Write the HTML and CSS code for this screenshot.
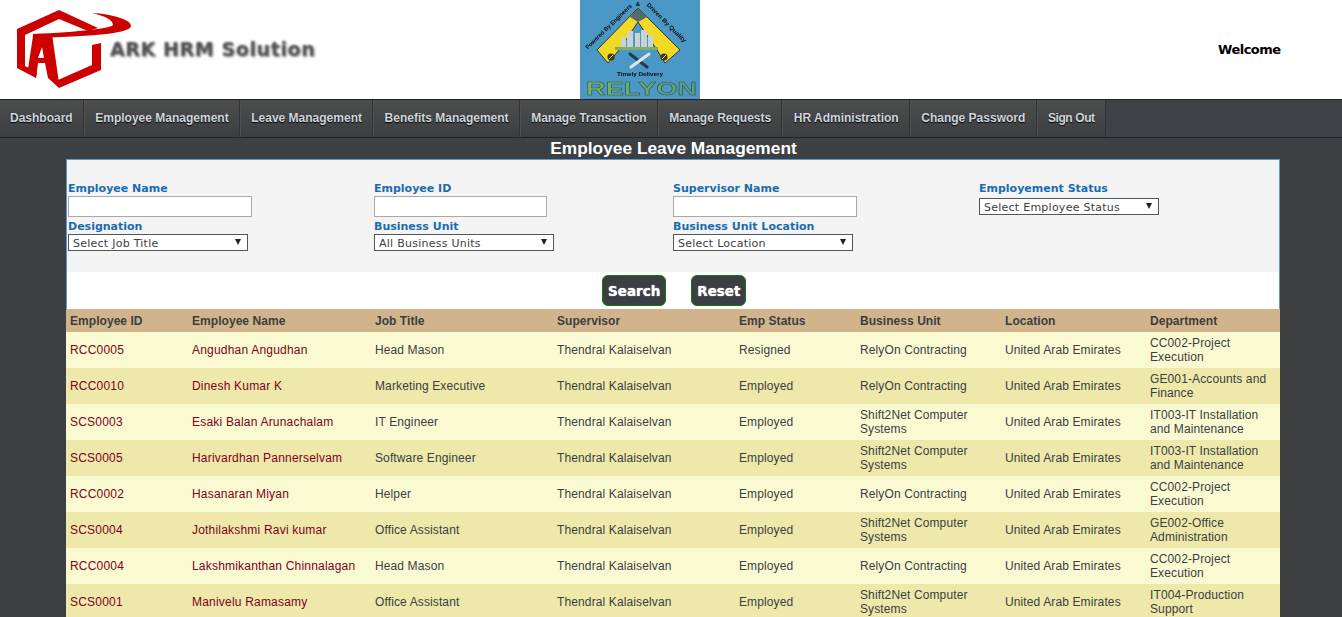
FILE: index.html
```html
<!DOCTYPE html>
<html lang="en">
<head>
<meta charset="utf-8">
<title>Employee Leave Management</title>
<link rel="stylesheet" href="styles.css">
</head>
<body>
<header class="top">
  <div class="brand">
    <svg class="brand-mark" width="135" height="90" viewBox="0 0 135 90">
      <g class="soft">
      <path class="red" d="M59 10 L17 29 L17 68 L36 78 L37 72 L25 66 L25 35 L59 19 L88 31 L98 28 Z"/>
      <path class="red" fill-rule="evenodd" d="M33 36 L52 34 L59 83 L48 78 L45 63 L38 63 L36 78 L28 69 Z M42 47 L38 58 L44 58 Z"/>
      <path class="red" d="M48 78 L59 88 L101 70 L101 43 L92 45 L92 65 L58 80 Z"/>
      <path class="red" d="M92 13 C112 14 132 20 131 26 C130 33 100 36 33 38 L33 34 C80 32 112 28 113 25 C113 20 105 16 92 13 Z"/>
      </g>
    </svg>
    <span class="brand-name">ARK HRM Solution</span>
  </div>
  <svg class="partner" width="120" height="99" viewBox="0 0 120 99">
    <defs>
      <linearGradient id="word" x1="0" y1="0" x2="1" y2="0">
        <stop offset="0" stop-color="#79b85f"/>
        <stop offset="1" stop-color="#4f9f86"/>
      </linearGradient>
    </defs>
    <rect width="120" height="99" fill="#4b97c6"/>
    <g class="soft">
    <path d="M17 50 L58 8 L100 50 L85 63 L77 50 L58 22 L39 50 L28 63 Z" fill="#f2d923" stroke="#2c3436" stroke-width="1"/>
    <path d="M58 8 L50 17 L58 22 L67 17 Z" fill="#59686b"/>
    <circle cx="31" cy="57" r="3.6" fill="#3a3a2a"/>
    <circle cx="84" cy="57" r="3.6" fill="#3a3a2a"/>
    <path d="M29 59 L33 55 M82 59 L86 55" stroke="#f2d923" stroke-width="1"/>
    <g fill="#c9d3d4">
      <rect x="41" y="37" width="5" height="10"/>
      <rect x="47" y="31" width="6" height="16"/>
      <rect x="55" y="33" width="5" height="14"/>
      <rect x="61" y="30" width="6" height="17"/>
      <rect x="68" y="35" width="5" height="12"/>
    </g>
    <rect x="35" y="47" width="43" height="3" fill="#7fae6a"/>
    <g stroke-linecap="round" fill="none">
      <path d="M50 54 L67 67" stroke="#1f3c52" stroke-width="3"/>
      <path d="M69 54 L51 67" stroke="#dfe6ea" stroke-width="3"/>
    </g>
    <text class="partner-small" x="60" y="76" text-anchor="middle" textLength="46" lengthAdjust="spacingAndGlyphs">Timely Delivery</text>
    <text class="partner-small" x="30" y="28" transform="rotate(-44 30 28)" text-anchor="middle" textLength="62" lengthAdjust="spacingAndGlyphs">Powered By Engineers</text>
    <text class="partner-small" x="58" y="6" text-anchor="middle">&amp;</text>
    <text class="partner-small" x="85" y="24" transform="rotate(45 85 24)" text-anchor="middle" textLength="53" lengthAdjust="spacingAndGlyphs">Driven By Quality</text>
    <text class="partner-word" x="6" y="95" textLength="111" lengthAdjust="spacingAndGlyphs" fill="url(#word)">RELYON</text>
    </g>
  </svg>
  <strong class="welcome">Welcome</strong>
</header>

<nav class="nav">
  <a class="nav-item" href="#">Dashboard</a>
  <a class="nav-item" href="#">Employee Management</a>
  <a class="nav-item" href="#">Leave Management</a>
  <a class="nav-item" href="#">Benefits Management</a>
  <a class="nav-item" href="#">Manage Transaction</a>
  <a class="nav-item" href="#">Manage Requests</a>
  <a class="nav-item" href="#">HR Administration</a>
  <a class="nav-item" href="#">Change Password</a>
  <a class="nav-item" href="#">Sign Out</a>
</nav>

<h1 class="title">Employee Leave Management</h1>

<main class="panel">
  <form class="filters">
    <div class="filter">
      <label class="label">Employee Name</label>
      <input class="text w-184" type="text">
      <label class="label gap">Designation</label>
      <span class="sel"><select><option>Select Job Title</option></select></span>
    </div>
    <div class="filter">
      <label class="label">Employee ID</label>
      <input class="text w-173" type="text">
      <label class="label gap">Business Unit</label>
      <span class="sel"><select><option>All Business Units</option></select></span>
    </div>
    <div class="filter">
      <label class="label">Supervisor Name</label>
      <input class="text w-184" type="text">
      <label class="label gap">Business Unit Location</label>
      <span class="sel"><select><option>Select Location</option></select></span>
    </div>
    <div class="filter">
      <label class="label">Employement Status</label>
      <span class="sel sel-status"><select><option>Select Employee Status</option></select></span>
    </div>
  </form>
  <div class="actions">
    <button class="btn" type="button">Search</button>
    <button class="btn" type="button">Reset</button>
  </div>
  <table class="grid">
    <colgroup>
      <col class="c1"><col class="c2"><col class="c3"><col class="c4"><col class="c5"><col class="c6"><col class="c7"><col class="c8">
    </colgroup>
    <thead>
      <tr><th>Employee ID</th><th>Employee Name</th><th>Job Title</th><th>Supervisor</th><th>Emp Status</th><th>Business Unit</th><th>Location</th><th>Department</th></tr>
    </thead>
    <tbody>
      <tr><td class="link">RCC0005</td><td class="link">Angudhan Angudhan</td><td>Head Mason</td><td>Thendral Kalaiselvan</td><td>Resigned</td><td>RelyOn Contracting</td><td>United Arab Emirates</td><td>CC002-Project Execution</td></tr>
      <tr><td class="link">RCC0010</td><td class="link">Dinesh Kumar K</td><td>Marketing Executive</td><td>Thendral Kalaiselvan</td><td>Employed</td><td>RelyOn Contracting</td><td>United Arab Emirates</td><td>GE001-Accounts and Finance</td></tr>
      <tr><td class="link">SCS0003</td><td class="link">Esaki Balan Arunachalam</td><td>IT Engineer</td><td>Thendral Kalaiselvan</td><td>Employed</td><td>Shift2Net Computer Systems</td><td>United Arab Emirates</td><td>IT003-IT Installation and Maintenance</td></tr>
      <tr><td class="link">SCS0005</td><td class="link">Harivardhan Pannerselvam</td><td>Software Engineer</td><td>Thendral Kalaiselvan</td><td>Employed</td><td>Shift2Net Computer Systems</td><td>United Arab Emirates</td><td>IT003-IT Installation and Maintenance</td></tr>
      <tr><td class="link">RCC0002</td><td class="link">Hasanaran Miyan</td><td>Helper</td><td>Thendral Kalaiselvan</td><td>Employed</td><td>RelyOn Contracting</td><td>United Arab Emirates</td><td>CC002-Project Execution</td></tr>
      <tr><td class="link">SCS0004</td><td class="link">Jothilakshmi Ravi kumar</td><td>Office Assistant</td><td>Thendral Kalaiselvan</td><td>Employed</td><td>Shift2Net Computer Systems</td><td>United Arab Emirates</td><td>GE002-Office Administration</td></tr>
      <tr><td class="link">RCC0004</td><td class="link">Lakshmikanthan Chinnalagan</td><td>Head Mason</td><td>Thendral Kalaiselvan</td><td>Employed</td><td>RelyOn Contracting</td><td>United Arab Emirates</td><td>CC002-Project Execution</td></tr>
      <tr><td class="link">SCS0001</td><td class="link">Manivelu Ramasamy</td><td>Office Assistant</td><td>Thendral Kalaiselvan</td><td>Employed</td><td>Shift2Net Computer Systems</td><td>United Arab Emirates</td><td>IT004-Production Support</td></tr>
    </tbody>
  </table>
</main>
</body>
</html>
```
FILE: styles.css
```css
* { box-sizing: border-box; }
html, body { height: 617px; overflow: hidden; }
body {
  margin: 0;
  background: #3c4043;
  font-family: "Liberation Sans", Arial, sans-serif;
  font-size: 12px;
  color: #3b3e42;
}

/* Header */
.top {
  height: 99px;
  background: #fff;
  display: grid;
  grid-template-columns: 580px 120px 518px 1fr;
  align-items: center;
}
.brand { display: flex; align-items: flex-start; height: 99px; }
.brand-mark { display: block; flex: none; }
.soft { filter: blur(0.4px); }
.red { fill: #cc0000; }
.brand-name {
  margin: 39px 0 0 -25px;
  font: bold 19px/20px "DejaVu Sans", Verdana, sans-serif;
  letter-spacing: .6px;
  color: #4f5254;
  text-shadow: 1px 1px 2px #888;
  filter: blur(1px);
  white-space: nowrap;
}
.partner { display: block; }
.partner-small { font: bold 6px "Liberation Sans", sans-serif; fill: #0b0b0b; }
.partner-word { font: bold 18px "Liberation Sans", sans-serif; stroke: #33564f; stroke-width: .5; }
.welcome {
  grid-column: 4;
  font: bold 13px "DejaVu Sans", Verdana, sans-serif;
  letter-spacing: -.5px;
  color: #000;
}

/* Navigation */
.nav {
  height: 39px;
  display: flex;
  background: #3e4145;
  border-top: 1px solid #222;
  border-bottom: 1px solid #222;
}
.nav-item {
  display: flex;
  align-items: center;
  padding: 0 10.3px 2px;
  background: linear-gradient(#4b4d4f, #3c3e40);
  border-right: 1px solid #333;
  border-left: 1px solid #4e5052;
  font: bold 12px "Liberation Sans", sans-serif;
  color: #cfd6dc;
  text-decoration: none;
  text-shadow: 0 1px 1px #000;
}
.nav-item:first-child { border-left: 0; padding-left: 10px; }
.nav-item:last-child { letter-spacing: -.4px; }

/* Title */
.title {
  margin: 0;
  height: 21px;
  padding-left: 5px;
  text-align: center;
  font: bold 17.33px/21px "Liberation Sans", sans-serif;
  color: #fff;
}

/* Panel */
.panel {
  margin: 0 62px 0 66px;
  background: #fff;
  border: 1px solid #5b9bd5;
  border-bottom: 0;
}
.filters {
  height: 112px;
  padding: 21px 0 0 1px;
  background: #f4f4f4;
  display: grid;
  grid-template-columns: 306px 299px 306px 1fr;
}
.filter { display: flex; flex-direction: column; align-items: flex-start; }
.label {
  font: bold 11px/15px "DejaVu Sans", Verdana, sans-serif;
  color: #1a6cb0;
}
.label.gap { margin-top: 2px; }
.text {
  height: 21px;
  background: #fff;
  border: 1px solid #a9a9a9;
  padding: 0;
}
.w-184 { width: 184px; }
.w-173 { width: 173px; }
.sel { position: relative; display: block; width: 180px; height: 17px; }
.sel-status { margin-top: 2px; }
.sel::after {
  content: "";
  position: absolute;
  right: 7px;
  top: 5px;
  border-left: 3.5px solid transparent;
  border-right: 3.5px solid transparent;
  border-top: 6px solid #222;
  pointer-events: none;
}
.sel select {
  display: block;
  width: 100%;
  height: 17px;
  appearance: none;
  background: #fff;
  border: 1px solid #555;
  border-radius: 0;
  padding: 2px 0 0 4px;
  font: 11px/13px "DejaVu Sans", Verdana, sans-serif;
  letter-spacing: .25px;
  color: #3b3e42;
}

/* Buttons */
.actions {
  height: 37px;
  padding-top: 3px;
  padding-left: 535px;
  display: flex;
  align-items: flex-start;
  gap: 25px;
}
.btn {
  height: 31px;
  padding: 1px 5px 0;
  background: #3b3e42;
  border: 1px solid #0c7a0c;
  border-radius: 6px;
  font: bold 13.5px "DejaVu Sans", Verdana, sans-serif;
  color: #fff;
  text-shadow: 0 0 1px #fff;
}

/* Table */
.grid {
  width: 1214px;
  margin-left: -1px;
  border-collapse: collapse;
  table-layout: fixed;
  letter-spacing: .12px;
}
.c1 { width: 122px; }
.c2 { width: 183px; }
.c3 { width: 182px; }
.c4 { width: 182px; }
.c5 { width: 121px; }
.c6 { width: 145px; }
.c7 { width: 145px; }
.c8 { width: 134px; }
th {
  height: 23px;
  padding: 0 4px;
  background: #d2b48c;
  text-align: left;
  font-weight: bold;
  letter-spacing: .05px;
  color: #3b3e42;
}
td {
  height: 36px;
  padding: 0 4px;
  line-height: 14px;
  vertical-align: middle;
}
tbody tr:nth-child(odd) { background: #fafad2; }
tbody tr:nth-child(even) { background: #eee8aa; }
td.link { color: #800020; letter-spacing: .2px; }
```
